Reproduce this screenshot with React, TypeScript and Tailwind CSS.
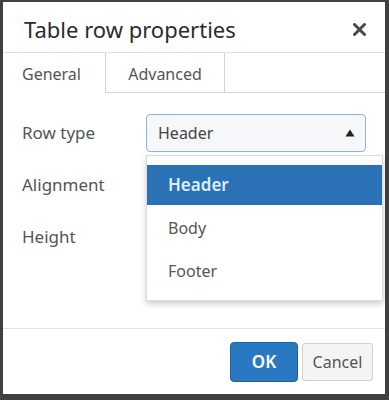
import { useState } from "react";

const options = ["Header", "Body", "Footer"];

export default function App() {
  const [rowType, setRowType] = useState("Header");
  const [open, setOpen] = useState(true);

  return (
    <div className="w-[389px] h-[400px] bg-[#404040] pt-[2px] pl-[3px] pr-[4px] pb-[6px] font-['Noto_Sans','Open_Sans',sans-serif] text-[#333]">
      <div className="relative flex h-full flex-col bg-white">
        <div className="flex h-[51px] items-center justify-between border-b border-[#e2e2e2] pl-[21px] pr-[19px] pt-[5px]">
          <h1 className="text-[22px] font-normal text-[#2b2b2b]">Table row properties</h1>
          <button className="text-[#4a4a4a]">
            <svg width="13" height="13" viewBox="0 0 13 13">
              <path d="M1.5 1.5 L11.5 11.5 M11.5 1.5 L1.5 11.5" stroke="currentColor" strokeWidth="3" strokeLinecap="round" />
            </svg>
          </button>
        </div>

        <div className="flex h-[40px]">
          <div className="flex w-[102px] items-center pl-[19px] pt-[2px] text-[16px] text-[#555]">General</div>
          <div className="flex w-[120px] items-center justify-center border-x border-b border-[#d4d4d4] bg-white pt-[2px] text-[16px] text-[#555]">Advanced</div>
          <div className="flex-1 border-b border-[#d4d4d4]" />
        </div>

        <div className="flex flex-1 flex-col gap-[14px] pt-[21px]">
          <div className="flex h-[38px] items-center">
            <span className="w-[143px] pl-[19px] text-[17px] text-[#555]">Row type</span>
            <button
              onClick={() => setOpen(!open)}
              className="flex h-[38px] w-[220px] items-center justify-between rounded-[4px] border border-[#8ab4dc] bg-[#f5f7f8] pl-[11px] pr-[10px] text-[16px] text-[#444]"
            >
              <span>{rowType}</span>
              <svg width="10" height="8" viewBox="0 0 10 8">
                <path d="M5 0.5 L9.5 7.5 L0.5 7.5 Z" fill="#222" />
              </svg>
            </button>
          </div>
          <div className="flex h-[38px] items-center">
            <span className="pl-[19px] text-[17px] text-[#555]">Alignment</span>
          </div>
          <div className="flex h-[38px] items-center">
            <span className="pl-[19px] text-[17px] text-[#555]">Height</span>
          </div>
        </div>

        <div className="flex h-[66px] items-center justify-end gap-[4px] border-t border-[#e2e2e2] pr-[12px]">
          <button className="h-[40px] w-[68px] rounded-[4px] border border-[#1f5f99] bg-[#2b78c2] text-[17px] font-semibold text-white">OK</button>
          <button className="h-[38px] w-[71px] rounded-[3px] border border-[#cfcfcf] bg-[#f4f4f4] text-[16px] text-[#555]">Cancel</button>
        </div>

        {open && (
          <ul className="absolute left-[143px] top-[153px] w-[237px] border border-[#dcdcdc] bg-white py-[9px] shadow-[0_3px_6px_rgba(0,0,0,0.2)]">
            {options.map((o) => (
              <li
                key={o}
                onClick={() => {
                  setRowType(o);
                  setOpen(false);
                }}
                className={
                  o === rowType
                    ? "flex h-[40px] items-center bg-[#2a72b5] pl-[21px] text-[17px] font-semibold text-[#dceeff]"
                    : "flex h-[43px] items-center pl-[21px] pt-[2px] text-[16px] text-[#555]"
                }
              >
                {o}
              </li>
            ))}
          </ul>
        )}
      </div>
    </div>
  );
}
